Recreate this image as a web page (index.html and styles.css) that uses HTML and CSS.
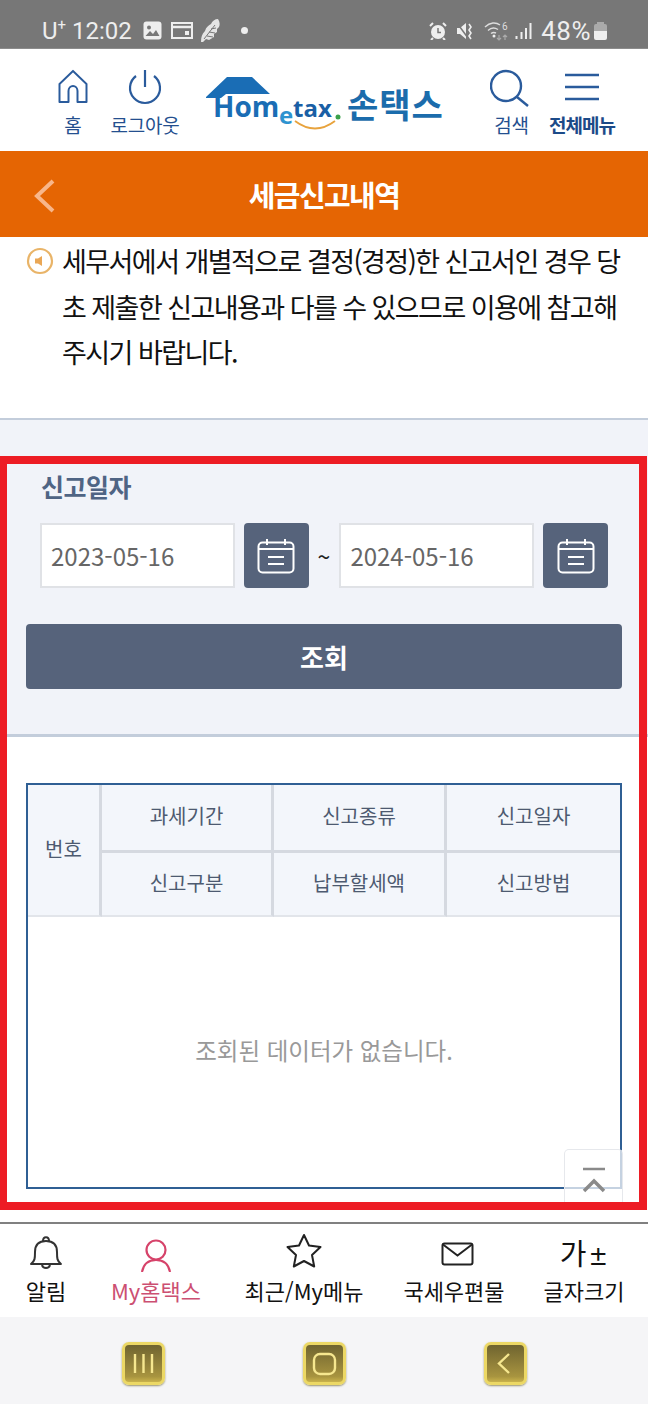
FILE: index.html
```html
<!DOCTYPE html>
<html lang="ko">
<head>
  <meta charset="UTF-8" />
  <meta name="viewport" content="width=device-width, initial-scale=1.0"/>
  <title>세금신고내역</title>
  <link rel="stylesheet" href="styles.css">
</head>
<body>
  <div class="status-bar">
    <div class="status-group">
      <span class="carrier">U<sup>+</sup> 12:02</span>
      <svg class="st-pic" width="19" height="19" viewBox="0 0 19 19"><rect x="0.5" y="0.5" width="18" height="18" rx="3" fill="#eee"/><circle cx="6" cy="6.5" r="2" fill="#777"/><path d="M2.5 15l4.5-5 3 3 3-4 3.5 6z" fill="#777"/></svg>
      <svg class="st-card" width="22" height="17" viewBox="0 0 22 17"><rect x="1" y="1" width="20" height="15" fill="none" stroke="#eee" stroke-width="2"/><path d="M1 5h20" stroke="#eee" stroke-width="2.5"/><rect x="14" y="9" width="4" height="4" fill="#eee"/></svg>
      <svg class="st-leaf" width="19" height="23" viewBox="0 0 19 23"><path d="M0 23c0-5 1-8 4-11 1-4 4-6 6-7 1-3 4-5 7-5 2 3 2 6 1 8l-2 2 0 3-3 2 0 3-5 3-3-1-3 3z" fill="#e4e4e4"/><path d="M3 20L14 6M6 17l6 1M8 13l6 1M10 10l5-1" stroke="#777" stroke-width="1"/></svg>
      <span class="st-dot"></span>
    </div>
    <div class="status-group">
      <svg width="18" height="18" viewBox="0 0 18 18"><circle cx="9" cy="10" r="7" fill="#eee"/><path d="M9 6v4.5h3" fill="none" stroke="#777" stroke-width="1.5"/><path d="M1 4l3-3M17 4l-3-3M4 16l-2 2M14 16l2 2" stroke="#eee" stroke-width="2"/></svg>
      <svg class="st-mute" width="19" height="18" viewBox="0 0 19 18"><path d="M1 6h3l6-5v16l-6-5H1z" fill="#eee"/><path d="M13 2l2 3-2 3 2 3-2 3 2 3" fill="none" stroke="#eee" stroke-width="1.6"/><path d="M1 1l11 15" stroke="#777" stroke-width="1.5"/></svg>
      <svg class="st-wifi" width="25" height="20" viewBox="0 0 25 20"><path d="M1 6c5-5 11-5 15-2M4 9.500c3-3 7-3 10-1M7 12.500c2-1.500 3-1.500 5-.5" fill="none" stroke="#ddd" stroke-width="1.400"/><circle cx="10" cy="15" r="1.500" fill="#eee"/><path d="M15 14v5m-2-2l2 2 2-2" fill="none" stroke="#aaa" stroke-width="1.200"/><path d="M21 19v-5m-2 2l2-2 2 2" fill="none" stroke="#aaa" stroke-width="1.200"/><text x="18" y="9" class="st-six">6</text></svg>
      <svg class="st-signal" width="17" height="18" viewBox="0 0 17 18"><path d="M1.500 14v3M6.500 10v7M11 6v11M15.500 1v16" stroke="#eee" stroke-width="2"/></svg>
      <span class="battery-text">48%</span>
      <span class="battery"><span class="battery-cap"></span><span class="battery-body"></span></span>
    </div>
  </div>

  <header class="top-header">
    <div class="head-group">
      <a class="head-item">
        <svg width="36" height="36" viewBox="0 0 36 36"><path d="M3 33V15L18 2l15 13v18H23V22a5 5 0 0 0-10 0v11z" transform="translate(1.800 0) scale(.9 1)" fill="none" stroke="#2a5b9c" stroke-width="2.200" stroke-linejoin="round"/></svg>
        <span>홈</span>
      </a>
      <a class="head-item">
        <svg width="36" height="36" viewBox="0 0 36 36"><path d="M9 7a15 15 0 1 0 18 0" fill="none" stroke="#2a5b9c" stroke-width="2.200"/><path d="M18 1v17" stroke="#2a5b9c" stroke-width="2.200"/></svg>
        <span>로그아웃</span>
      </a>
    </div>
    <svg class="logo" width="250" height="60" viewBox="0 0 250 60">
      <path d="M0 22L21 2H46L64 19H20L15 23H0z" fill="#1a6db5"/>
      <text x="7" y="42" class="logo-home">Hom</text>
      <text x="73" y="49" class="logo-e">e</text>
      <text x="87" y="42" class="logo-tax">tax</text>
      <circle cx="132" cy="42" r="2.500" fill="#3aa14a"/>
      <path d="M89 46q20 15 40 0" fill="none" stroke="#e8a33d" stroke-width="1.800"/>
      <text x="141" y="43" class="logo-son">손택스</text>
    </svg>
    <div class="head-group">
      <a class="head-item">
        <svg width="40" height="38" viewBox="0 0 40 38"><circle cx="16" cy="17" r="15" fill="none" stroke="#2a5b9c" stroke-width="2.400"/><path d="M27 28l11 9" stroke="#2a5b9c" stroke-width="2.400"/></svg>
        <span class="label-search">검색</span>
      </a>
      <a class="head-item head-item-bold">
        <svg width="36" height="36" viewBox="0 0 36 36"><path d="M1 6h34M1 18h34M1 30h34" stroke="#2a5b9c" stroke-width="2.400"/></svg>
        <span>전체메뉴</span>
      </a>
    </div>
  </header>

  <div class="title-bar">
    <svg class="back" width="24" height="34" viewBox="0 0 24 34"><path d="M20 2L4 17l16 15" fill="none" stroke="#f8b68a" stroke-width="4"/></svg>
    <h1>세금신고내역</h1>
  </div>

  <section class="notice">
    <svg class="notice-icon" width="28" height="28" viewBox="0 0 28 28"><circle cx="14" cy="14" r="12" fill="#fff" stroke="#e9b468" stroke-width="2.200"/><path d="M9 11.500h3l4-2.500v10l-4-2.500H9z" fill="#eaa755"/></svg>
    <p>세무서에서 개별적으로 결정(경정)한 신고서인 경우 당초 제출한 신고내용과 다를 수 있으므로 이용에 참고해 주시기 바랍니다.</p>
  </section>

  <section class="search-box">
    <h2>신고일자</h2>
    <div class="date-row">
      <input class="date-input" type="text" value="2023-05-16">
      <button class="cal-btn"><svg width="38" height="36" viewBox="0 0 38 36"><rect x="1.500" y="4.500" width="35" height="30" rx="4" fill="none" stroke="#fff" stroke-width="2"/><path d="M1.500 11h35M10 1v6M28 1v6M11 19h16M11 26h16" fill="none" stroke="#fff" stroke-width="2"/></svg></button>
      <span class="tilde">~</span>
      <input class="date-input" type="text" value="2024-05-16">
      <button class="cal-btn"><svg width="38" height="36" viewBox="0 0 38 36"><rect x="1.500" y="4.500" width="35" height="30" rx="4" fill="none" stroke="#fff" stroke-width="2"/><path d="M1.500 11h35M10 1v6M28 1v6M11 19h16M11 26h16" fill="none" stroke="#fff" stroke-width="2"/></svg></button>
    </div>
    <button class="search-btn">조회</button>
  </section>

  <section class="result">
    <table class="result-table">
      <colgroup><col class="col-no"><col class="col-a"><col class="col-b"><col class="col-b"></colgroup>
      <tr class="row-one">
        <th rowspan="2" class="th-no">번호</th>
        <th>과세기간</th>
        <th>신고종류</th>
        <th class="th-last">신고일자</th>
      </tr>
      <tr class="row-two">
        <th>신고구분</th>
        <th>납부할세액</th>
        <th class="th-last">신고방법</th>
      </tr>
      <tr>
        <td colspan="4" class="empty">조회된 데이터가 없습니다.</td>
      </tr>
    </table>
  </section>

  <nav class="bottom-nav">
    <a class="nav-item nav-w1">
      <svg width="34" height="40" viewBox="0 -3 34 40"><path d="M2 29c4-3 4-6 4-12 0-7 4-11 11-11s11 4 11 11c0 6 0 9 4 12z" fill="none" stroke="#333" stroke-width="2" stroke-linejoin="round"/><path d="M14 6c0-5 6-5 6 0M13 30c1 4 7 4 8 0" fill="none" stroke="#333" stroke-width="2"/></svg>
      <span>알림</span>
    </a>
    <a class="nav-item nav-w2 nav-on">
      <svg width="34" height="40" viewBox="0 0 34 40"><circle cx="17" cy="18" r="9.500" fill="none" stroke="#d6436a" stroke-width="2.200"/><path d="M3 40c1.500-8 7-12 14-12s12.500 4 14 12" fill="none" stroke="#d6436a" stroke-width="2.200"/></svg>
      <span>My홈택스</span>
    </a>
    <a class="nav-item nav-w3">
      <svg width="36" height="40" viewBox="0 -1 36 40"><path d="M18 2l5 10.500 11.500 1.500-8.500 8 2.200 11.500L18 28l-10.200 5.500L10 22l-8.500-8L13 12.500z" fill="none" stroke="#222" stroke-width="2" stroke-linejoin="round"/></svg>
      <span>최근/My메뉴</span>
    </a>
    <a class="nav-item nav-w4">
      <svg width="42" height="40" viewBox="0 0 42 40"><rect x="9.500" y="11.500" width="30" height="21" rx="2" fill="none" stroke="#222" stroke-width="2"/><path d="M10 12.500l14.500 11 14.500-11" fill="none" stroke="#222" stroke-width="2"/></svg>
      <span>국세우편물</span>
    </a>
    <a class="nav-item nav-w5">
      <strong class="font-size-mark">가<small>±</small></strong>
      <span>글자크기</span>
    </a>
  </nav>

  <div class="soft-keys">
    <span class="gold-key"><svg width="25" height="25" viewBox="0 0 25 25"><path d="M4 3v19M12.500 3v19M21 3v19" stroke="#f6e78f" stroke-width="2.400"/></svg></span>
    <span class="gold-key"><svg width="25" height="25" viewBox="0 0 25 25"><rect x="2" y="3" width="21" height="20" rx="6" fill="none" stroke="#f6e78f" stroke-width="2.400"/></svg></span>
    <span class="gold-key"><svg width="25" height="25" viewBox="0 0 25 25"><path d="M16 3L6 12.500 16 22" fill="none" stroke="#f6e78f" stroke-width="2.400"/></svg></span>
  </div>

  <a class="to-top"><svg width="24" height="26" viewBox="0 0 24 26"><path d="M1 2h22" stroke="#8a8a8a" stroke-width="2.500"/><path d="M2 24L12 14l10 10" fill="none" stroke="#8a8a8a" stroke-width="3.500"/></svg></a>
  <div class="red-mark"></div>
</body>
</html>
```

FILE: styles.css
```css
* {
  box-sizing: border-box;
}

body {
  margin: 0;
  width: 648px;
  position: relative;
  background-color: #fff;
  font-family: "Noto Sans CJK KR", "Noto Sans", sans-serif;
}

h1, h2, p {
  margin: 0;
}

/* status bar */
.status-bar {
  height: 49px;
  padding: 13px 41px 0 42px;
  background-color: #777;
  border-bottom: 1px solid #8c8c8c;
  display: flex;
  justify-content: space-between;
  align-items: center;
  color: #eee;
}

.status-group {
  display: flex;
  align-items: center;
  gap: 9px;
}

.carrier {
  font-family: Roboto, sans-serif;
  font-size: 24px;
  line-height: 30px;
  margin-right: 2px;
}

.carrier sup {
  font-size: 15px;
  line-height: 0;
}

.st-leaf {
  margin-left: -1px;
}

.st-dot {
  width: 7px;
  height: 7px;
  margin-left: 12px;
  border-radius: 50%;
  background-color: #eee;
}

.st-six {
  font-family: Roboto, sans-serif;
  font-size: 10px;
  fill: #ddd;
}

.st-signal {
  margin-left: -3px;
}

.battery-text {
  font-family: Roboto, sans-serif;
  font-size: 26px;
  line-height: 30px;
  letter-spacing: 0.5px;
}

.battery {
  display: flex;
  flex-direction: column;
  align-items: center;
  margin-left: -6px;
}

.battery-cap {
  width: 7px;
  height: 2px;
  background-color: #aaa;
}

.battery-body {
  width: 13px;
  height: 16px;
  border-radius: 2px;
  background: linear-gradient(#aaa 45%, #eee 45%);
}

/* header */
.top-header {
  height: 102px;
  padding: 0 30px 0 37px;
  display: flex;
  justify-content: space-between;
  align-items: flex-start;
}

.head-group {
  display: flex;
}

.head-item {
  width: 72px;
  padding-top: 20px;
  display: flex;
  flex-direction: column;
  align-items: center;
  color: #244f8f;
  font-size: 19px;
  line-height: 28px;
  white-space: nowrap;
}

.head-item span {
  margin-top: 6px;
  letter-spacing: -0.2px;
}

.head-item .label-search {
  margin-top: 4px;
  margin-left: 3px;
}

.head-item-bold {
  font-weight: 700;
  color: #1c4a88;
}

.head-item-bold span {
  letter-spacing: -1px;
}

.logo {
  margin: 26px 0 0 6px;
}

.logo-home {
  font-family: "Open Sans", sans-serif;
  font-size: 28px;
  font-weight: 700;
  fill: #1a6db5;
}

.logo-e {
  font-family: "Open Sans", sans-serif;
  font-size: 24px;
  font-weight: 700;
  fill: #2e93d0;
}

.logo-tax {
  font-family: "Open Sans", sans-serif;
  font-size: 24px;
  font-weight: 700;
  fill: #1a5fa5;
}

.logo-son {
  font-family: "Noto Sans CJK KR", sans-serif;
  font-size: 34px;
  font-weight: 700;
  letter-spacing: 1px;
  fill: #1b6cac;
}

/* title */
.title-bar {
  height: 86px;
  background-color: #e56503;
  display: flex;
  align-items: center;
  justify-content: center;
  position: relative;
}

.title-bar h1 {
  color: #fff;
  font-size: 29px;
  font-weight: 700;
  letter-spacing: -1.6px;
  line-height: 40px;
  margin-top: -1px;
}

.back {
  position: absolute;
  left: 33px;
  top: 28px;
}

/* notice */
.notice {
  height: 183px;
  padding: 1px 26px 0 26px;
  border-bottom: 2px solid #c3cddb;
  display: flex;
  align-items: flex-start;
}

.notice-icon {
  flex: none;
  margin: 9px 8px 0 0;
}

.notice p {
  width: 562px;
  color: #111;
  font-size: 27px;
  line-height: 45.5px;
  letter-spacing: -1.55px;
  word-break: break-all;
}

/* search */
.search-box {
  padding: 48px 26px 45px;
  background-color: #f1f3f9;
  border-bottom: 3px solid #c3cddb;
}

.search-box h2 {
  margin-left: 15px;
  color: #4f6484;
  font-size: 25px;
  font-weight: 700;
  line-height: 36px;
  letter-spacing: -0.5px;
}

.date-row {
  margin: 19px 14px 0 14px;
  display: flex;
  align-items: center;
}

.date-input {
  width: 195px;
  height: 65px;
  padding: 0 9px;
  border: 2px solid #e0e2e6;
  background-color: #fff;
  color: #666;
  font-family: inherit;
  font-size: 24px;
}

.cal-btn {
  width: 65px;
  height: 65px;
  margin-left: 9px;
  padding: 0;
  border: none;
  border-radius: 4px;
  background-color: #56637b;
  display: flex;
  align-items: center;
  justify-content: center;
}

.tilde {
  width: 31px;
  text-align: center;
  color: #222;
  font-size: 23px;
}

.search-btn {
  display: block;
  width: 596px;
  height: 65px;
  margin-top: 36px;
  border: none;
  border-radius: 4px;
  background-color: #56637b;
  color: #fff;
  font-family: inherit;
  font-size: 26px;
  font-weight: 700;
}

/* table */
.result {
  height: 485px;
  padding: 46px 26px 0;
}

.result-table {
  width: 596px;
  height: 406px;
  table-layout: fixed;
  border-collapse: separate;
  border-spacing: 0;
  border: 2px solid #2f5f94;
}

.col-no {
  width: 74px;
}

.col-a {
  width: 172px;
}

.col-b {
  width: 173px;
}

.result-table th {
  padding: 0 0 4px;
  background-color: #f3f6fb;
  color: #4d5a70;
  font-size: 20px;
  font-weight: 400;
  border-right: 3px solid #d5d9e0;
  border-bottom: 2px solid #e2e5ea;
}

.result-table .th-last {
  border-right: none;
}

.row-one {
  height: 68px;
}

.row-one th {
  border-bottom: 3px solid #d5d9e0;
}

.row-one .th-no {
  border-bottom: 2px solid #e2e5ea;
}

.row-two {
  height: 64px;
}

.empty {
  height: 270px;
  padding: 0 0 4px;
  text-align: center;
  color: #999;
  font-size: 23.5px;
}

/* bottom nav */
.bottom-nav {
  height: 95px;
  border-top: 2px solid #808080;
  display: flex;
}

.nav-item {
  padding-top: 8px;
  display: flex;
  flex-direction: column;
  align-items: center;
  color: #111;
  font-size: 22px;
  line-height: 32px;
  white-space: nowrap;
}

.nav-item svg {
  display: block;
}

.nav-item span {
  margin-top: 2px;
}

.nav-w1 { width: 92px; }
.nav-w2 { width: 128px; }
.nav-w3 { width: 168px; }
.nav-w4 { width: 132px; }
.nav-w5 { width: 128px; }

.nav-on {
  color: #cc4f72;
}

.font-size-mark {
  height: 40px;
  font-size: 29px;
  line-height: 40px;
  font-weight: 400;
}

.font-size-mark small {
  margin-left: 2px;
  font-size: 20px;
  font-weight: 700;
}

/* soft keys */
.soft-keys {
  height: 87px;
  padding-top: 25px;
  background-color: #f5f5f7;
  display: flex;
  justify-content: center;
  gap: 138px;
}

.gold-key {
  width: 43px;
  height: 43px;
  border: 3px solid #ecd865;
  border-radius: 7px;
  background: linear-gradient(#6f6430, #a8943f 85%, #c9b24c);
  box-shadow: 0 1px 2px rgba(90, 80, 20, 0.6);
  display: flex;
  align-items: center;
  justify-content: center;
}

/* overlays */
.to-top {
  position: absolute;
  left: 564px;
  top: 1149px;
  width: 59px;
  height: 56px;
  padding: 17px 0 0 17px;
  border: 1px solid #e6e8ec;
  border-bottom: none;
  border-radius: 5px 5px 0 0;
  background-color: rgba(255, 255, 255, 0.72);
}

.to-top svg {
  display: block;
}

.red-mark {
  position: absolute;
  left: 0;
  top: 456px;
  width: 647px;
  height: 754px;
  border: 8px solid #ed1c24;
  border-left-width: 7px;
}
```
